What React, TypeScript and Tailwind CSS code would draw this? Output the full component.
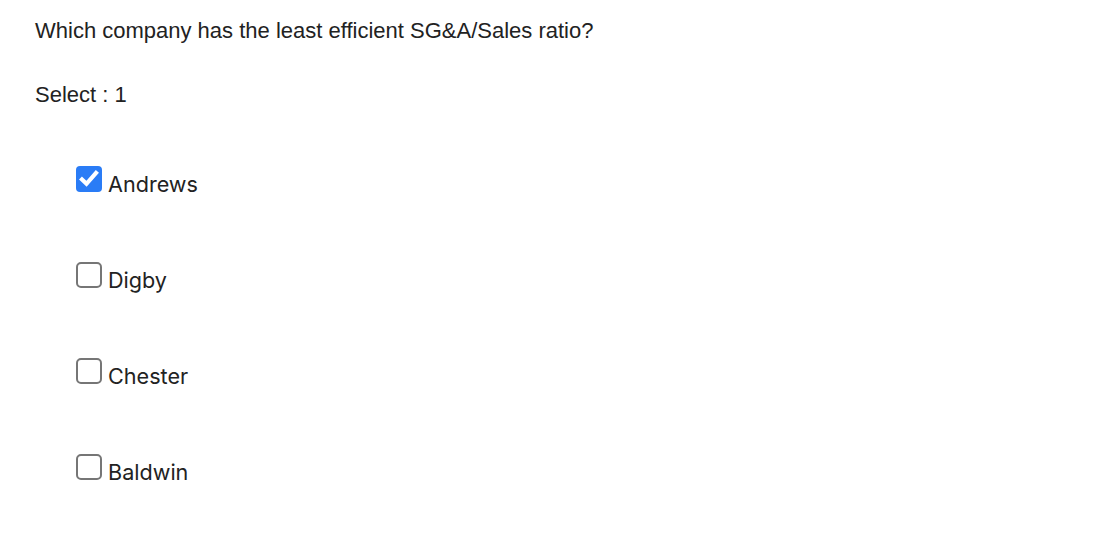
import React from "react";

const options = [
  { label: "Andrews", checked: true },
  { label: "Digby", checked: false },
  { label: "Chester", checked: false },
  { label: "Baldwin", checked: false },
];

function Box({ checked }: { checked: boolean }) {
  if (checked) {
    return (
      <span className="block h-[26px] w-[26px] rounded-[4px] bg-[#2a7cf6]">
        <svg width="26" height="26" viewBox="0 0 26 26">
          <path d="M6 13.5 L10.5 17.8 L20 7" fill="none" stroke="white" strokeWidth="4.2" strokeLinecap="square" strokeLinejoin="miter" />
        </svg>
      </span>
    );
  }
  return <span className="block h-[26px] w-[26px] rounded-[5px] border-2 border-[#767676] bg-white" />;
}

export default function App() {
  return (
    <div className="min-h-[536px] w-[1102px] bg-white pl-[35px] pt-[18px]">
      <p className="text-[22px] leading-[26px] text-[#222] [font-family:'Liberation_Sans',Arial,sans-serif]">
        Which company has the least efficient SG&amp;A/Sales ratio?
      </p>
      <p className="mt-[38px] text-[22px] leading-[26px] text-[#222] [font-family:'Liberation_Sans',Arial,sans-serif]">
        Select : 1
      </p>
      <div className="mt-[58px] flex flex-col gap-[70px] pl-[41px]">
        {options.map((o) => (
          <label key={o.label} className="flex h-[26px] items-center gap-[6px]">
            <Box checked={o.checked} />
            <span className="mt-[9px] text-[21.6px] leading-[26px] text-[#222] [font-family:Inter,sans-serif]">{o.label}</span>
          </label>
        ))}
      </div>
    </div>
  );
}
